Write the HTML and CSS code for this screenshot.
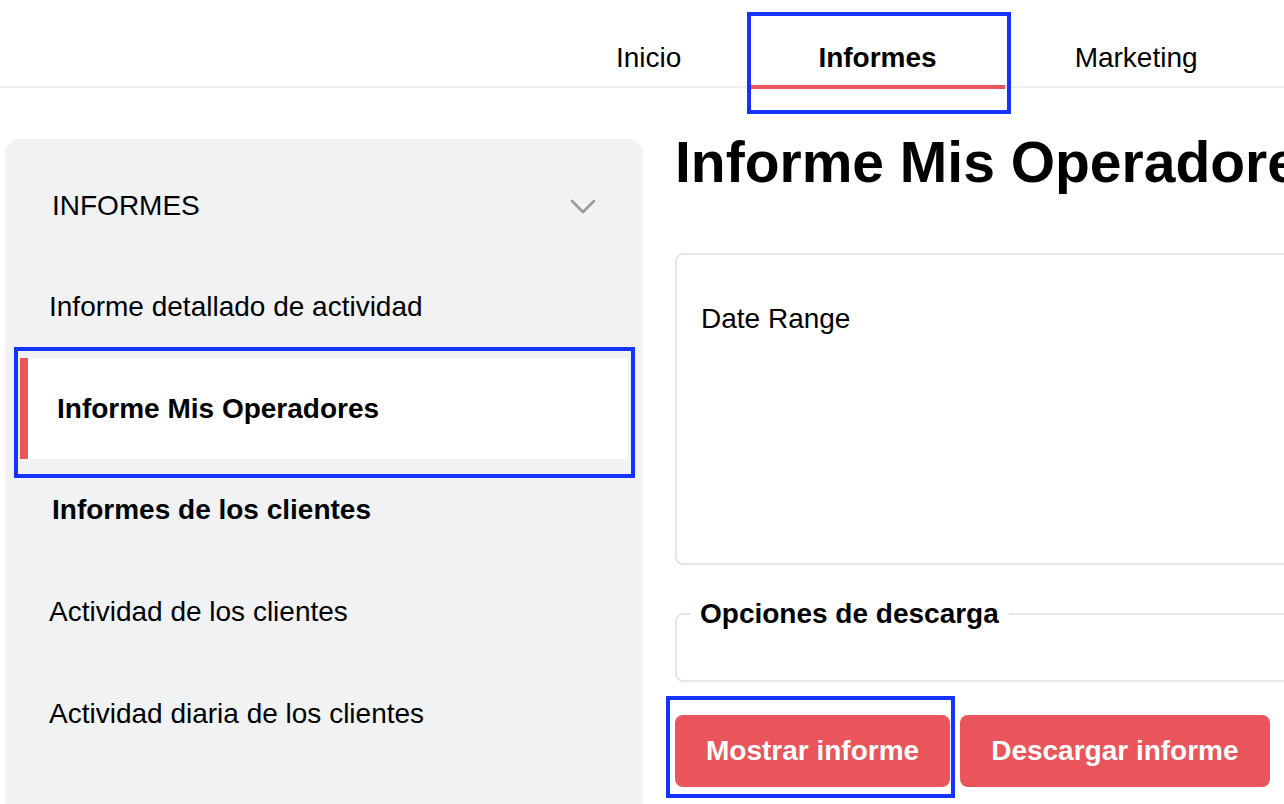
FILE: index.html
```html
<!DOCTYPE html>
<html lang="es">
<head>
<meta charset="utf-8">
<title>Informe Mis Operadores</title>
<link rel="stylesheet" href="styles.css">
</head>
<body>
<header class="topbar">
  <nav class="tabs">
    <a class="tab">Inicio</a>
    <a class="tab tab-active">Informes<span class="mark mark-nav"></span></a>
    <a class="tab">Marketing</a>
  </nav>
</header>
<div class="layout">
  <aside class="sidebar">
    <div class="side-head">
      <span>INFORMES</span>
      <svg class="chev" width="26" height="16" viewBox="0 0 26 16"><polyline points="2,2 13,13 24,2" fill="none" stroke="#9b9b9b" stroke-width="2.6" stroke-linecap="round" stroke-linejoin="round"/></svg>
    </div>
    <div class="side-item">Informe detallado de actividad</div>
    <div class="side-item side-active">Informe Mis Operadores<span class="mark mark-side"></span></div>
    <div class="side-item side-group">Informes de los clientes</div>
    <div class="side-item">Actividad de los clientes</div>
    <div class="side-item">Actividad diaria de los clientes</div>
  </aside>
  <main class="main">
    <h1 class="title">Informe Mis Operadores</h1>
    <section class="card">
      <div class="label">Date Range</div>
    </section>
    <fieldset class="options">
      <legend class="legend">Opciones de descarga</legend>
      <div class="options-body"></div>
    </fieldset>
    <div class="actions">
      <button class="btn">Mostrar informe<span class="mark mark-btn"></span></button>
      <button class="btn">Descargar informe</button>
    </div>
  </main>
</div>
</body>
</html>
```
FILE: styles.css
```css
* { box-sizing: border-box; }
html, body { margin: 0; padding: 0; }
body {
  width: 1284px;
  height: 804px;
  overflow: hidden;
  background: #ffffff;
  color: #000000;
  font-family: "Liberation Sans", Arial, Helvetica, sans-serif;
  font-size: 28px;
}
.topbar {
  height: 88px;
  border-bottom: 2px solid #efefef;
  display: flex;
  padding-left: 549px;
}
.tabs {
  display: flex;
  gap: 3px;
  height: 89px;
}
.tab {
  position: relative;
  display: block;
  padding: 42px 67px 11px;
  line-height: 32px;
  border-bottom: 4px solid transparent;
  white-space: nowrap;
}
.tab-active {
  font-weight: bold;
  padding-right: 68px;
  border-bottom-color: #e9555a;
}
.mark {
  position: absolute;
  border: 4px solid #1433ff;
  pointer-events: none;
}
.mark-nav { left: -4px; right: -6px; top: 12px; bottom: -29px; }
.layout {
  display: flex;
  gap: 32px;
  padding-left: 5px;
}
.sidebar {
  flex: none;
  width: 638px;
  height: 700px;
  margin-top: 51px;
  background: #f1f2f4;
  border-radius: 14px 14px 0 0;
  padding-top: 17px;
}
.side-head {
  height: 100px;
  display: flex;
  align-items: center;
  justify-content: space-between;
  padding: 0 47px;
  line-height: 32px;
}
.chev { display: block; margin-top: 2px; }
.side-item {
  position: relative;
  height: 102px;
  display: flex;
  align-items: center;
  padding-left: 44px;
  line-height: 32px;
  white-space: nowrap;
}
.side-group {
  font-weight: bold;
  padding-left: 47px;
}
.side-active {
  font-weight: bold;
  background: #ffffff;
  margin: 0 15px;
  height: 101px;
  border-left: 8px solid #e9555a;
  padding-left: 29px;
}
.mark-side { left: -14px; right: -7px; top: -11px; bottom: -19px; }
.main {
  flex: none;
  width: 1000px;
  padding-top: 42px;
}
.title {
  margin: 0;
  font-size: 57px;
  line-height: 64px;
  font-weight: bold;
  white-space: nowrap;
}
.card {
  margin-top: 59px;
  height: 312px;
  border: 2px solid #e6e6e6;
  border-radius: 8px;
  padding: 48px 24px;
}
.label { line-height: 32px; }
.options {
  margin: 33px 0 0;
  border: 2px solid #e6e6e6;
  border-radius: 8px;
  padding: 0 13px;
  min-width: 0;
}
.legend {
  font-weight: bold;
  line-height: 32px;
  padding: 0 10px;
}
.options-body { height: 50px; }
.actions {
  display: flex;
  gap: 10px;
  margin-top: 33px;
}
.btn {
  position: relative;
  height: 72px;
  padding: 0 31px;
  border: none;
  border-radius: 8px;
  background: #e9555a;
  color: #ffffff;
  font-family: inherit;
  font-size: 28px;
  font-weight: bold;
  line-height: 32px;
}
.mark-btn { left: -9px; right: -5px; top: -19px; bottom: -11px; }
```
